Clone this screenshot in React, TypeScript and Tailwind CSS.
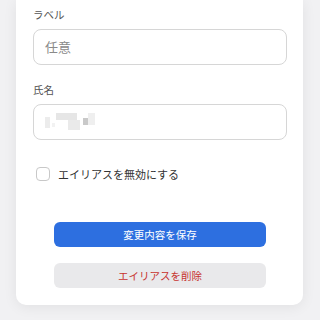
import React from "react";

export default function App() {
  const font = { fontFamily: '"Noto Sans CJK JP", "Noto Sans", sans-serif' };
  return (
    <div className="w-[320px] h-[320px] bg-[#f1f1f3] overflow-hidden" style={font}>
      <div className="ml-[16px] w-[287px] bg-white rounded-b-[10px] shadow-[0_2px_14px_rgba(0,0,0,0.07)] pt-[6px] pl-[17px] pr-[16px] pb-[17px]">
        <div className="h-[18px] leading-[18px] text-[10.5px] text-[#555]">ラベル</div>
        <div className="mt-[5px] h-[36px] border border-[#d6d6d6] rounded-[8px] flex items-center px-[11px]">
          <span className="text-[13px] text-[#8a8a8a]">任意</span>
        </div>
        <div className="mt-[16px] h-[18px] leading-[18px] text-[10.5px] text-[#555]">氏名</div>
        <div className="mt-[5px] h-[36px] border border-[#d6d6d6] rounded-[8px] flex items-center px-[11px]">
          <svg width="60" height="20" viewBox="0 0 60 20" className="-ml-[1px]">
            <g style={{ filter: "blur(0.6px)" }}>
              <rect x="1" y="5" width="5" height="11" fill="#ececec" />
              <rect x="12" y="1" width="21" height="7" fill="#e6e6e6" />
              <rect x="24" y="8" width="12" height="10" fill="#eaeaea" />
              <rect x="39" y="6" width="5" height="7" fill="#c9c9c9" />
              <rect x="44" y="1" width="7" height="12" fill="#efefef" />
              <rect x="8" y="11" width="3" height="4" fill="#f2f2f2" />
            </g>
          </svg>
        </div>
        <div className="mt-[25px] h-[18px] flex items-center">
          <div className="ml-[3px] w-[14px] h-[14px] rounded-[4px] border border-[#c8c8c8] bg-white" />
          <span className="ml-[8px] text-[11px] text-[#333] leading-[18px]">エイリアスを無効にする</span>
        </div>
        <div className="mt-[39px] flex flex-col items-center">
          <button className="w-[212px] h-[25px] rounded-[6px] bg-[#2d6fe0] text-white text-[10.5px] leading-[25px]">
            変更内容を保存
          </button>
          <button className="mt-[16px] w-[212px] h-[25px] rounded-[6px] bg-[#e9e9eb] text-[#c7332e] text-[10.5px] leading-[25px]">
            エイリアスを削除
          </button>
        </div>
      </div>
    </div>
  );
}
